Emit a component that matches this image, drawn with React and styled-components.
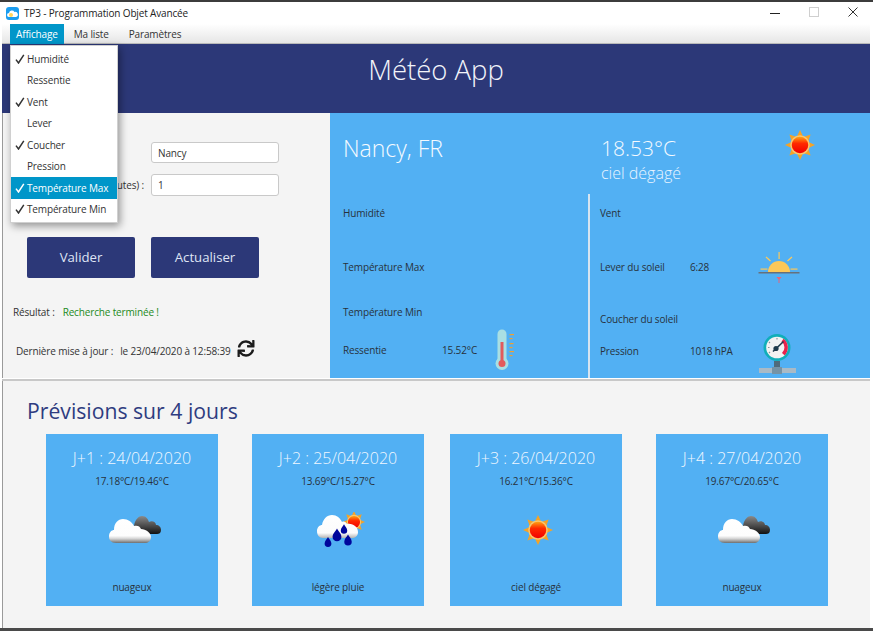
import styled, { createGlobalStyle } from "styled-components";
import { FaSync } from "react-icons/fa";

const GlobalStyle = createGlobalStyle`
  html, body {
    margin: 0;
    padding: 0;
    background: #fff;
  }
  * {
    box-sizing: border-box;
  }
`;

const Window = styled.div`
  position: relative;
  width: 873px;
  height: 631px;
  overflow: hidden;
  border-top: 2px solid #3c3c3c;
  border-bottom: 3px solid #4a4a4a;
  padding: 0 3px 0 2px;
  font-family: "Open Sans", "Noto Sans", sans-serif;
  font-size: 10px;
  letter-spacing: -0.15px;
  color: #333;
  background: #fff;
  display: flex;
  flex-direction: column;
`;

const TitleBar = styled.div`
  height: 22px;
  flex: none;
  display: flex;
  align-items: center;
  padding-left: 4px;
  gap: 5px;
  color: #222;
  background: #fff;
`;

const WindowControls = styled.div`
  margin: -2px 0 0 auto;
  display: flex;
  align-items: center;
  height: 100%;
  padding-right: 12px;
  gap: 29px;
`;

const MenuBar = styled.div`
  height: 20px;
  flex: none;
  display: flex;
  background: linear-gradient(#ffffff, #e6e6e6);
  border-bottom: 1px solid #b9b9b9;
  padding-left: 8px;
`;

const MenuTitle = styled.div`
  height: 20px;
  padding: 0 ${(p) => p.$pad}px;
  display: flex;
  align-items: center;
  color: ${(p) => (p.$active ? "#fff" : "#333")};
  background: ${(p) => (p.$active ? "#0096c9" : "transparent")};
`;

const Header = styled.header`
  height: 69px;
  flex: none;
  background: #2c3878;
  color: #f2f4fa;
  font-size: 27.5px;
  font-weight: 300;
  letter-spacing: 0;
  text-align: center;
  padding-top: 7px;
`;

const Main = styled.div`
  height: 265px;
  flex: none;
  display: flex;
`;

const LeftPanel = styled.section`
  width: 328px;
  flex: none;
  background: #f4f4f4;
  border-left: 1px solid #9a9a9a;
  padding-top: 29px;
`;

const Form = styled.div`
  display: grid;
  grid-template-columns: 148px 128px;
  grid-auto-rows: 21px;
  row-gap: 11px;
`;

const FormLabel = styled.label`
  text-align: right;
  padding-right: 7px;
  line-height: 22px;
  white-space: nowrap;
`;

const Field = styled.div`
  background: #fff;
  border: 1px solid #c9c9c9;
  border-radius: 3px;
  padding-left: 6px;
  line-height: 20px;
  height: ${(p) => p.$h || 21}px;
`;

const Buttons = styled.div`
  display: flex;
  gap: 16px;
  margin: 42px 0 0 24px;
`;

const NavyButton = styled.button`
  width: 108px;
  height: 41px;
  padding: 0 0 2px;
  border: none;
  border-radius: 2px;
  background: #2c3878;
  color: #dfe4f4;
  font-family: inherit;
  font-size: 13.2px;
`;

const ResultLine = styled.div`
  margin: 27px 0 0 10px;
  line-height: 14px;
  display: flex;
  gap: 8px;
`;

const Success = styled.span`
  color: #1c8a1c;
`;

const UpdateLine = styled.div`
  margin: 20px 0 0 13px;
  height: 24px;
  display: flex;
  align-items: center;
  gap: 7px;
  color: #333;
`;

const RefreshIcon = styled(FaSync)`
  width: 20px;
  height: 17px;
  margin: -6px 0 0 -2px;
  color: #1c1c1c;
`;

const WeatherPanel = styled.section`
  flex: 1;
  background: #52b0f3;
  display: grid;
  grid-template-columns: 260px 1fr;
  grid-template-rows: 81px 1fr;
`;

const CityBox = styled.div`
  padding: 19px 0 0 13px;
  color: #f5faff;
  font-size: 23px;
  font-weight: 300;
  letter-spacing: 0;
`;

const CurrentBox = styled.div`
  display: flex;
  padding: 20px 0 0 11px;
`;

const Temp = styled.div`
  color: #f5faff;
  font-size: 21px;
  font-weight: 300;
  letter-spacing: 0;
  line-height: 30px;
`;

const Sky = styled.div`
  color: #e8f4ff;
  font-size: 16px;
  font-weight: 300;
  letter-spacing: 0;
  line-height: 20px;
`;

const CurrentSun = styled.div`
  margin: -3px 0 0 104px;
`;

const StatColumn = styled.div`
  display: flex;
  flex-direction: column;
  padding-left: ${(p) => p.$pad}px;
  border-right: ${(p) => (p.$divider ? "2px solid #d6e4f0" : "none")};
`;

const StatRow = styled.div`
  height: ${(p) => p.$h}px;
  display: flex;
  align-items: center;
  color: #28323c;
`;

const StatLabel = styled.span`
  width: ${(p) => p.$w}px;
  flex: none;
  padding-bottom: ${(p) => p.$lift || 0}px;
  white-space: nowrap;
`;

const StatValue = styled.span`
  width: ${(p) => p.$w}px;
  flex: none;
  padding-bottom: ${(p) => p.$lift || 0}px;
  white-space: nowrap;
`;

const GaugeWrap = styled.div`
  margin-top: -4px;
  display: flex;
`;

const Divider = styled.div`
  height: 3px;
  flex: none;
  background: #fff;
  border-bottom: 2px solid #c8c8c8;
`;

const Forecast = styled.section`
  flex: 1;
  background: #f4f4f4;
  border-left: 1px solid #9a9a9a;
  padding: 17px 0 0 24px;
`;

const ForecastTitle = styled.h2`
  margin: 0;
  color: #2f3c80;
  font-size: 21.2px;
  font-weight: 400;
  letter-spacing: 0;
  line-height: 25px;
`;

const Cards = styled.div`
  display: flex;
  margin: 11px 0 0 19px;
`;

const Card = styled.article`
  width: 172px;
  height: 172px;
  flex: none;
  margin-left: ${(p) => p.$gap || 0}px;
  background: #52b0f3;
  display: flex;
  flex-direction: column;
  align-items: center;
  text-align: center;
`;

const CardDate = styled.div`
  margin-top: 13px;
  height: 22px;
  line-height: 22px;
  color: #f0f7ff;
  font-size: 16px;
  font-weight: 300;
  letter-spacing: 0;
  white-space: nowrap;
`;

const CardTemps = styled.div`
  margin-top: 5px;
  height: 14px;
  line-height: 14px;
  color: #28323c;
`;

const CardIcon = styled.div`
  height: 66px;
  margin-top: 9px;
  padding-left: ${(p) => p.$shift}px;
  display: flex;
  align-items: center;
  justify-content: center;
`;

const CardSky = styled.div`
  margin-top: 17px;
  color: #28323c;
`;

const Dropdown = styled.div`
  position: absolute;
  left: 10px;
  top: 43px;
  width: 108px;
  height: 178px;
  padding: 2px 0 0;
  background: #fff;
  border: 1px solid #d0d0d0;
  box-shadow: 2px 3px 8px rgba(0, 0, 0, 0.4);
  z-index: 5;
`;

const DropItem = styled.div`
  height: 21.5px;
  display: flex;
  align-items: center;
  padding-left: 4px;
  gap: 2px;
  white-space: nowrap;
  color: ${(p) => (p.$active ? "#fff" : "#333")};
  background: ${(p) => (p.$active ? "#0096c9" : "transparent")};
`;

const CheckSlot = styled.span`
  width: 10px;
  height: 10px;
  flex: none;
  display: flex;
`;

function Check() {
  return (
    <svg width="10" height="10" viewBox="0 0 10 10">
      <path d="M1 5.6 L3.5 9 L8.8 0.8" fill="none" stroke="currentColor" strokeWidth="1.5" />
    </svg>
  );
}

function AppGlyph() {
  return (
    <svg width="13" height="13" viewBox="0 0 13 13">
      <rect width="13" height="13" rx="3" fill="#1b9df0" />
      <path d="M3 10 a2 2 0 0 1 0-4 a3 3 0 0 1 5.5-1 a2.6 2.6 0 0 1 1.5 5 z" fill="#fff" />
      <circle cx="5" cy="8" r="2" fill="#ffd45c" />
    </svg>
  );
}

function Sun({ size = 30 }) {
  const spikes = [];
  for (let i = 0; i < 8; i++) {
    const a = (i * Math.PI) / 4;
    const b = Math.PI / 7;
    const pt = (r, t) => `${20 + r * Math.sin(t)},${20 - r * Math.cos(t)}`;
    spikes.push(`${pt(20, a)} ${pt(11, a - b)} ${pt(11, a + b)}`);
  }
  return (
    <svg width={size} height={size} viewBox="0 0 40 40">
      <defs>
        <linearGradient id="sunCore" x1="0" y1="0" x2="0" y2="1">
          <stop offset="0" stopColor="#ffa312" />
          <stop offset="0.4" stopColor="#ff2a00" />
          <stop offset="1" stopColor="#f00000" />
        </linearGradient>
      </defs>
      {spikes.map((p) => (
        <polygon key={p} points={p} fill="#f5a327" />
      ))}
      <circle cx="20" cy="20" r="13" fill="#f9c66f" />
      <circle cx="20" cy="20" r="11" fill="url(#sunCore)" />
    </svg>
  );
}

function Clouds() {
  return (
    <svg width="54" height="29" viewBox="0 0 54 29">
      <defs>
        <linearGradient id="whiteCloud" x1="0" y1="0" x2="0" y2="1">
          <stop offset="0" stopColor="#ffffff" />
          <stop offset="0.7" stopColor="#fdfdfd" />
          <stop offset="0.82" stopColor="#d4d4d4" />
          <stop offset="1" stopColor="#6f6f6f" />
        </linearGradient>
        <linearGradient id="darkCloud" x1="0" y1="0" x2="0" y2="1">
          <stop offset="0" stopColor="#8a8a8a" />
          <stop offset="0.6" stopColor="#444" />
          <stop offset="1" stopColor="#111" />
        </linearGradient>
      </defs>
      <path d="M25 10 C26 3 30 0 33 0 C37 0 39 3 40 6 C43 4 47 6 47 9 C50 9 52 11 52 14 C52 17 50 18 48 18 L32 18 Z" fill="url(#darkCloud)" />
      <path d="M7 27 C2 27 0 24 0 20.500 C0 16 3 14 5 14 C5 7 9 3 14 3 C19 3 23 6 25 10 C28 9 31 10 32 13 C37 13 42 17 42 21 C42 25 39 27 36 27 Z" fill="url(#whiteCloud)" />
    </svg>
  );
}

function RainSun() {
  const drops = [
    [11, 30, 1],
    [20, 23, 1.3],
    [27, 17, 0.95],
    [31, 28, 1.1],
  ];
  return (
    <svg width="48" height="36" viewBox="0 0 48 36">
      <defs>
        <linearGradient id="rainCloud" x1="0" y1="0" x2="0" y2="1">
          <stop offset="0" stopColor="#ffffff" />
          <stop offset="0.78" stopColor="#fcfcfc" />
          <stop offset="1" stopColor="#b4b4b4" />
        </linearGradient>
      </defs>
      <g transform="translate(26 -1)">
        <Sun size={22} />
      </g>
      <path d="M6 26 C2 26 0 23 0 19 C0 15 3 13 5 13 C6 7 10 3 15 3 C20 3 23 6 25 10 C27 9 29 10 30 12 C36 11 41 15 41 20 C41 24 38 26 35 26 Z" fill="url(#rainCloud)" />
      {drops.map(([x, y, s]) => (
        <path
          key={x}
          transform={`translate(${x} ${y}) scale(${s})`}
          d="M0 -5 C1 -3 3.400 -1 3.400 1.500 A3.400 3.400 0 0 1 -3.400 1.500 C-3.400 -1 -1 -3 0 -5 Z"
          fill="#00069c"
        />
      ))}
    </svg>
  );
}

function Thermometer() {
  return (
    <svg width="20" height="42" viewBox="0 0 20 42">
      <rect x="2.500" y="0.500" width="9" height="34" rx="4.500" fill="#a9dfe3" />
      <circle cx="7" cy="34.500" r="6.500" fill="#a9dfe3" />
      <rect x="5.500" y="13" width="3" height="21" fill="#e25a5c" />
      <circle cx="7" cy="34.500" r="3.500" fill="#e25a5c" />
      {[
        [5, 4.500],
        [9, 3],
        [14, 4],
        [18, 3],
        [22, 4.500],
        [26, 3],
      ].map(([y, w]) => (
        <rect key={y} x="14.500" y={y} width={w} height="1.200" fill="#f0a030" />
      ))}
    </svg>
  );
}

function Sunrise() {
  return (
    <svg width="42" height="32" viewBox="0 0 42 32">
      <path d="M10 21 A11 11 0 0 1 32 21 Z" fill="#fdc858" />
      <rect x="0.500" y="21" width="41" height="1.500" fill="#66707c" />
      <rect x="2.500" y="17.500" width="7" height="1.200" fill="#fdc858" />
      <rect x="32.500" y="17.500" width="7" height="1.200" fill="#fdc858" />
      <rect x="20.500" y="1" width="1.200" height="7" fill="#fdc858" />
      <path d="M8 6 L12.500 10 M34 6 L29.500 10" stroke="#fdc858" strokeWidth="1.200" />
      <path d="M18.500 26 H23.500 L21.500 28.500 V32 H20.500 V28.500 Z" fill="#e8637a" />
    </svg>
  );
}

function Gauge() {
  return (
    <svg width="40" height="42" viewBox="0 0 40 42">
      <rect x="1" y="34" width="37" height="5" fill="#a9bac6" />
      <rect x="16" y="27" width="6" height="7" fill="#4f6b7c" />
      <rect x="14" y="33" width="10" height="7" fill="#7593a6" />
      <circle cx="19" cy="13.500" r="13.500" fill="#10aeb9" />
      <circle cx="19" cy="13.500" r="10.800" fill="#f2f2f2" />
      <path d="M25.500 4.800 A10.800 10.800 0 0 1 26.500 21.300 L24 19 A7.500 7.500 0 0 0 23.500 7.500 Z" fill="#e8234c" />
      <path d="M11 8 L12 9 M10 13.500 L11.500 13.500 M11 19 L12 18 M19 4 L19 5.500" stroke="#8a949c" strokeWidth="1.200" />
      <path d="M15 17.500 L25.500 7.500" stroke="#1f3a4c" strokeWidth="1.600" />
      <circle cx="18" cy="14.500" r="2.600" fill="#1f3a4c" />
    </svg>
  );
}

const checks = [
  ["Humidité", true],
  ["Ressentie", false],
  ["Vent", true],
  ["Lever", false],
  ["Coucher", true],
  ["Pression", false],
  ["Température Max", true, true],
  ["Température Min", true],
];

const forecasts = [
  { day: "J+1 : 24/04/2020", temps: "17.18°C/19.46°C", sky: "nuageux", icon: <Clouds />, gap: 0, shift: 8 },
  { day: "J+2 : 25/04/2020", temps: "13.69°C/15.27°C", sky: "légère pluie", icon: <RainSun />, gap: 34, shift: 6 },
  { day: "J+3 : 26/04/2020", temps: "16.21°C/15.36°C", sky: "ciel dégagé", icon: <Sun />, gap: 26, shift: 4 },
  { day: "J+4 : 27/04/2020", temps: "19.67°C/20.65°C", sky: "nuageux", icon: <Clouds />, gap: 34, shift: 6 },
];

export default function App() {
  return (
    <Window>
      <GlobalStyle />
      <TitleBar>
        <AppGlyph />
        <span>TP3 - Programmation Objet Avancée</span>
        <WindowControls>
          <svg width="10" height="10" viewBox="0 0 10 10">
            <rect y="6" width="10" height="1" fill="#222" />
          </svg>
          <svg width="10" height="10" viewBox="0 0 10 10">
            <rect x="0.500" y="0.500" width="9" height="9" fill="none" stroke="#cfcfcf" />
          </svg>
          <svg width="10" height="10" viewBox="0 0 10 10">
            <path d="M0.500 0.500 L9.500 9.500 M9.500 0.500 L0.500 9.500" stroke="#333" strokeWidth="1" />
          </svg>
        </WindowControls>
      </TitleBar>

      <MenuBar>
        <MenuTitle $active $pad={6}>Affichage</MenuTitle>
        <MenuTitle $pad={10}>Ma liste</MenuTitle>
        <MenuTitle $pad={10}>Paramètres</MenuTitle>
      </MenuBar>

      <Header>Météo App</Header>

      <Main>
        <LeftPanel>
          <Form>
            <FormLabel />
            <Field>Nancy</Field>
            <FormLabel>utes) :</FormLabel>
            <Field $h={22}>1</Field>
          </Form>
          <Buttons>
            <NavyButton>Valider</NavyButton>
            <NavyButton>Actualiser</NavyButton>
          </Buttons>
          <ResultLine>
            <span>Résultat :</span>
            <Success>Recherche terminée !</Success>
          </ResultLine>
          <UpdateLine>
            <span>Dernière mise à jour :</span>
            <span>le 23/04/2020 à 12:58:39</span>
            <RefreshIcon />
          </UpdateLine>
        </LeftPanel>

        <WeatherPanel>
          <CityBox>Nancy, FR</CityBox>
          <CurrentBox>
            <div>
              <Temp>18.53°C</Temp>
              <Sky>ciel dégagé</Sky>
            </div>
            <CurrentSun>
              <Sun />
            </CurrentSun>
          </CurrentBox>

          <StatColumn $pad={13} $divider>
            <StatRow $h={38}>
              <StatLabel $w={99}>Humidité</StatLabel>
            </StatRow>
            <StatRow $h={70}>
              <StatLabel $w={99}>Température Max</StatLabel>
            </StatRow>
            <StatRow $h={20}>
              <StatLabel $w={99}>Température Min</StatLabel>
            </StatRow>
            <StatRow $h={56}>
              <StatLabel $w={99}>Ressentie</StatLabel>
              <StatValue $w={53}>15.52°C</StatValue>
              <Thermometer />
            </StatRow>
          </StatColumn>

          <StatColumn $pad={10}>
            <StatRow $h={38}>
              <StatLabel $w={90}>Vent</StatLabel>
            </StatRow>
            <StatRow $h={70}>
              <StatLabel $w={90}>Lever du soleil</StatLabel>
              <StatValue $w={68}>6:28</StatValue>
              <Sunrise />
            </StatRow>
            <StatRow $h={34}>
              <StatLabel $w={90}>Coucher du soleil</StatLabel>
            </StatRow>
            <StatRow $h={42}>
              <StatLabel $w={90} $lift={12}>Pression</StatLabel>
              <StatValue $w={68} $lift={12}>1018 hPA</StatValue>
              <GaugeWrap>
                <Gauge />
              </GaugeWrap>
            </StatRow>
          </StatColumn>
        </WeatherPanel>
      </Main>

      <Divider />

      <Forecast>
        <ForecastTitle>Prévisions sur 4 jours</ForecastTitle>
        <Cards>
          {forecasts.map((f) => (
            <Card key={f.day} $gap={f.gap}>
              <CardDate>{f.day}</CardDate>
              <CardTemps>{f.temps}</CardTemps>
              <CardIcon $shift={f.shift}>{f.icon}</CardIcon>
              <CardSky>{f.sky}</CardSky>
            </Card>
          ))}
        </Cards>
      </Forecast>

      <Dropdown>
        {checks.map(([name, on, active]) => (
          <DropItem key={name} $active={active}>
            <CheckSlot>{on && <Check />}</CheckSlot>
            {name}
          </DropItem>
        ))}
      </Dropdown>
    </Window>
  );
}
